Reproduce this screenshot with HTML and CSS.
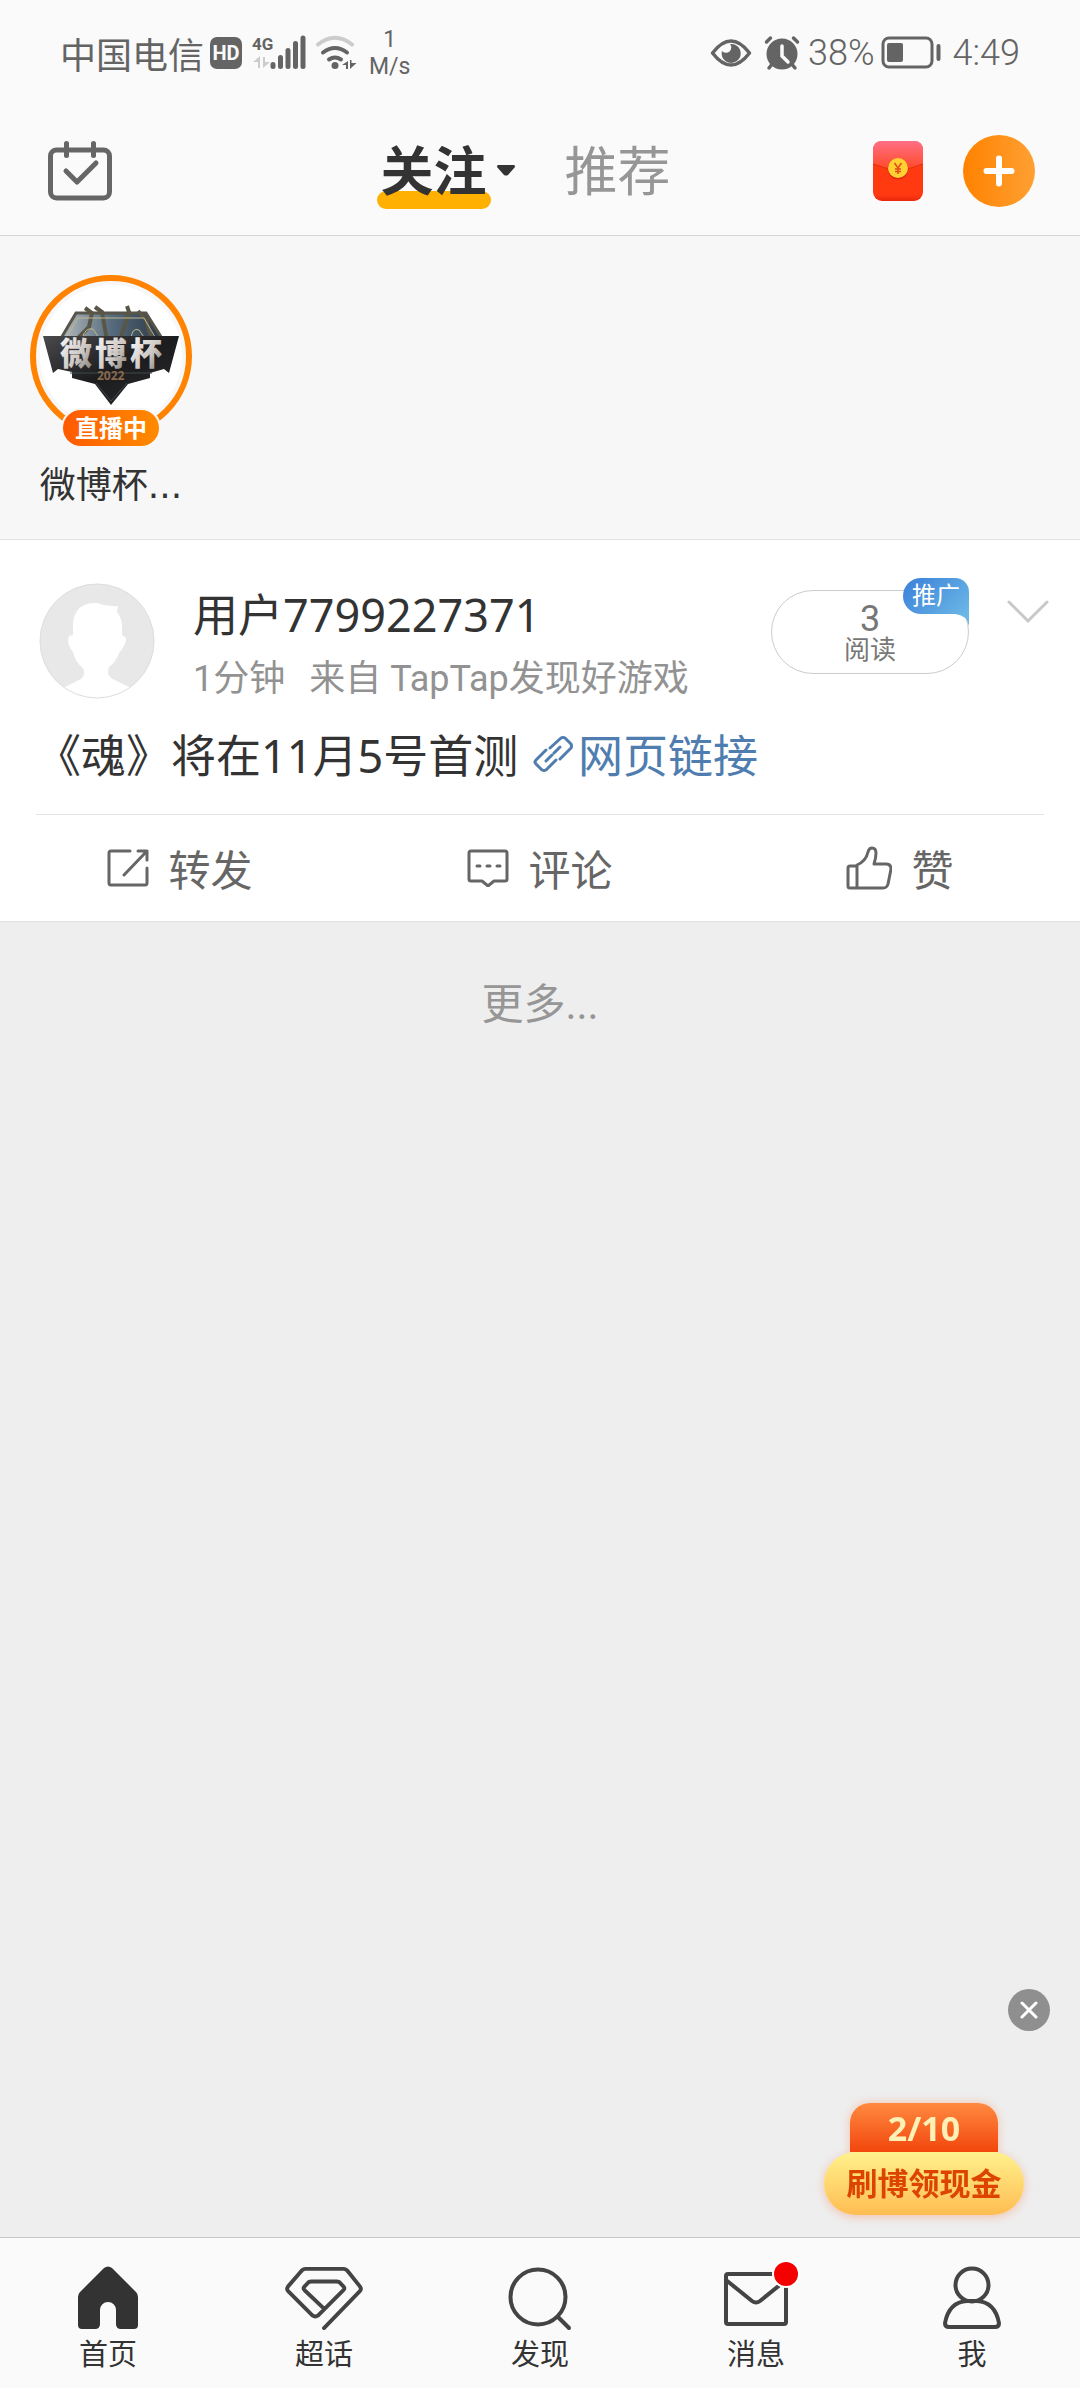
FILE: index.html
```html
<!DOCTYPE html>
<html lang="zh-CN">
	<head>
		<meta charset="UTF-8" />
		<meta name="viewport" content="width=device-width, initial-scale=1" />
		<title>微博</title>
		<link rel="stylesheet" href="styles.css">
	</head>
	<body>
		<div class="status">
			<div class="status-left">
				<span class="carrier">中国电信</span>
				<span class="hd">HD</span>
				<svg class="signal" width="54" height="36" viewBox="0 0 54 36">
					<text x="0" y="15" class="net">4G</text>
					<path d="M8 21v12H6v-6H1zM11 33V22h2v5h5z" fill="#ccc" />
					<g stroke="#646464" stroke-width="5" stroke-linecap="round">
						<path d="M21 29.500v2M28.500 22.500v9M36 15.500v16M43.500 8.500v23M51 3v28.500" />
					</g>
				</svg>
				<svg class="wifi" width="41" height="36" viewBox="0 0 41 36">
					<g fill="none" stroke="#646464" stroke-width="4" stroke-linecap="round">
						<path d="M2 9.500Q19 -4 36 9.500" stroke="#ccc" />
						<path d="M7 17.500Q19 8.500 31 17.500" />
						<path d="M13 24.500Q19 20.500 25 24.500" />
					</g>
					<circle cx="19" cy="30.500" r="3.500" fill="#646464" />
					<path d="M32 26v8h-2v-4h-4zM34 34v-9h1.500v3h5z" fill="#646464" />
				</svg>
				<span class="speed"><span>1</span><span>M/s</span></span>
			</div>
			<div class="status-right">
				<svg width="42" height="30" viewBox="0 0 42 30">
					<path d="M2.500 15Q21 -9 39.500 15Q21 39 2.500 15z" fill="none" stroke="#646464" stroke-width="3.500" stroke-linejoin="round" />
					<path d="M20 6a9.500 9.500 0 1 1-8 7 5 5 0 1 0 8-7z" fill="#646464" />
				</svg>
				<svg class="alarm" width="36" height="36" viewBox="0 0 36 36">
					<g stroke="#646464" stroke-width="3.500" stroke-linecap="round">
						<path d="M2.500 7l4-4M33.500 7l-4-4M5 33l4-5M31 33l-4-5" />
					</g>
					<circle cx="18" cy="19" r="15.500" fill="#646464" />
					<path d="M18 11v10l6 6" fill="none" stroke="#fafafa" stroke-width="3.500" stroke-linecap="round" />
				</svg>
				<span class="percent">38%</span>
				<svg class="battery" width="60" height="34" viewBox="0 0 60 34">
					<rect x="2" y="2" width="49" height="29" rx="6" fill="none" stroke="#646464" stroke-width="3" />
					<rect x="6" y="7" width="16" height="19" rx="2" fill="#646464" />
					<path d="M57.500 10v13" stroke="#646464" stroke-width="4" stroke-linecap="round" />
				</svg>
				<span class="clock">4:49</span>
			</div>
		</div>

		<header class="topbar">
			<button class="icon-btn" aria-label="签到">
				<svg width="64" height="60" viewBox="0 0 64 60" fill="none" stroke="#666" stroke-width="5" stroke-linecap="round" stroke-linejoin="round">
					<rect x="2.500" y="9" width="59" height="48" rx="6" />
					<path d="M18.500 2.500v12M45.500 2.500v12M18 30l11 11 19-19" />
				</svg>
			</button>
			<nav class="tabs">
				<a href="#" class="tab active">关注</a>
				<svg class="caret" width="18" height="11" viewBox="0 0 18 11"><path d="M1 0h16q1 0 1 2l-7 8q-2 1-4 0L0 2q0-2 1-2z" fill="#333" /></svg>
				<a href="#" class="tab">推荐</a>
			</nav>
			<div class="top-actions">
				<button class="icon-btn" aria-label="红包">
					<svg width="50" height="60" viewBox="0 0 50 60">
						<defs>
							<linearGradient id="flap" x1="0" y1="0" x2="0" y2="1">
								<stop offset="0" stop-color="#ff6f86" />
								<stop offset="1" stop-color="#ff4a26" />
							</linearGradient>
							<linearGradient id="packet" x1="0" y1="0" x2="0" y2="1">
								<stop offset="0.900" stop-color="#ff3a10" />
								<stop offset="1" stop-color="#e9260c" />
							</linearGradient>
						</defs>
						<rect width="50" height="60" rx="9" fill="url(#packet)" />
						<path d="M0 23V9q0-9 9-9h32q9 0 9 9v14q-25 11-50 0z" fill="url(#flap)" />
						<path d="M0 23q25 11 50 0" fill="none" stroke="#e52c10" stroke-width="1" />
						<circle cx="25" cy="28" r="10.500" fill="#d92b10" />
						<circle cx="25" cy="27" r="10" fill="#ffd034" />
						<path d="M21.500 22l3.500 5 3.500-5M25 27v6M22 28h6M22 30.500h6" fill="none" stroke="#e5481a" stroke-width="1.500" />
					</svg>
				</button>
				<button class="add" aria-label="发微博">
					<svg width="32" height="32" viewBox="0 0 32 32" stroke="#fff" stroke-width="6" stroke-linecap="round"><path d="M16 3.500v25M3.500 16h25" /></svg>
				</button>
			</div>
		</header>

		<section class="stories">
			<a href="#" class="story">
				<span class="ring">
					<svg width="142" height="142" viewBox="0 0 142 142">
						<defs>
							<linearGradient id="glass" x1="0" y1="0" x2="1" y2="0">
								<stop offset="0" stop-color="#b5bcc0" />
								<stop offset="0.500" stop-color="#566b7c" />
								<stop offset="1" stop-color="#2a3846" />
							</linearGradient>
							<linearGradient id="plate" x1="0" y1="0" x2="1" y2="1">
								<stop offset="0" stop-color="#4a4a4c" />
								<stop offset="0.500" stop-color="#1c1c1f" />
								<stop offset="1" stop-color="#2c2c2e" />
							</linearGradient>
							<linearGradient id="steel" x1="0" y1="0" x2="1" y2="1">
								<stop offset="0" stop-color="#fff" />
								<stop offset="0.600" stop-color="#ccc6c2" />
								<stop offset="1" stop-color="#79736e" />
							</linearGradient>
						</defs>
						<circle cx="71" cy="71" r="71" fill="#fff" />
						<path d="M20 55L36 28h70l17 27z" fill="url(#glass)" stroke="#57544a" stroke-width="3" />
						<path d="M45 23l7 5-3 14-12 12M55 22l7 5 5 28M87 21l2 6-9 28M98 26l8 9 6 20" fill="none" stroke="#5a5647" stroke-width="4" />
						<path d="M27 52l11-19h66l11 19M42 54q3-12 11-10l8 12M91 54q1-12 8-9l7 10" fill="none" stroke="#c1b68c" stroke-width="1" />
						<path d="M3 51h136l-10 37-5-4-14 4v5l-22 6-17 21-16-21-23-6v-6l-14-3-5 4z" fill="url(#plate)" />
						<path d="M30 88h82M56 98l15 18 16-18" fill="none" stroke="#3d4a4d" stroke-width="1" />
						<text x="20" y="80" class="cup">微</text>
						<text x="55" y="80" class="cup">博</text>
						<text x="90" y="80" class="cup">杯</text>
						<text x="57" y="95" class="year">2022</text>
					</svg>
					<span class="live">直播中</span>
				</span>
				<span class="story-name">微博杯...</span>
			</a>
		</section>

		<main class="feed">
			<article class="post">
				<div class="post-head">
					<svg class="avatar" width="116" height="116" viewBox="0 0 116 116">
						<defs><clipPath id="round"><circle cx="58" cy="58" r="57" /></clipPath></defs>
						<circle cx="58" cy="58" r="57" fill="#e8e8e8" />
						<path clip-path="url(#round)" d="M34 39Q37 19 58 20Q69 24 79 23L78 29Q82 34 83 41V52L87 55Q88 61 80 70Q77 79 70 84Q66 94 78 98L98 108V116H18V108L38 98Q48 94 44 85Q36 79 34 69Q27 60 30 53L34 52z" fill="#fff" />
						<circle cx="58" cy="58" r="57" fill="none" stroke="#ddd" />
					</svg>
					<div class="author">
						<a href="#" class="name">用户7799227371</a>
						<div class="meta"><span>1分钟</span><span>来自 TapTap发现好游戏</span></div>
					</div>
					<div class="reads">
						<span class="count">3</span>
						<span class="reads-label">阅读</span>
						<a href="#" class="promote">推广<svg width="14" height="12" viewBox="0 0 14 12"><path d="M0 0h14v12Q12 1 0 0z" fill="#6bb8e6" /></svg></a>
					</div>
					<button class="icon-btn more" aria-label="更多操作">
						<svg width="42" height="24" viewBox="0 0 42 24" fill="none" stroke="#c8c8c8" stroke-width="3" stroke-linecap="round"><path d="M2 2l19 19L40 2" /></svg>
					</button>
				</div>
				<p class="text">《魂》将在11月5号首测 <a href="#"><svg width="45" height="37" viewBox="0 0 45 37" fill="none" stroke="#507daf" stroke-width="3" stroke-linecap="round" stroke-linejoin="round"><path d="M16 14L6 24q-2 2 0 4l6 6q2 1 4 0l10-10M20 12L31 2q2-1 4 0l6 6q1 2 0 4L30 23M16 25l6-6M24 17l6-6" /></svg>网页链接</a></p>
				<div class="actions">
					<button>
						<svg width="42" height="38" viewBox="0 0 42 38" fill="none" stroke="#666" stroke-width="3" stroke-linecap="round" stroke-linejoin="round"><path d="M23 2H4Q2 2 2 4v30q0 2 2 2h34q2 0 2-2V19M31 2h9v9M40 2L17 26" /></svg>
						转发
					</button>
					<button>
						<svg width="42" height="38" viewBox="0 0 42 38" fill="none" stroke="#666" stroke-width="3" stroke-linecap="round" stroke-linejoin="round"><path d="M4 2h34q2 0 2 2v26q0 2-2 2H27l-6 5-6-5H4q-2 0-2-2V4q0-2 2-2z" /><path d="M10 17h3M20 17h3M30 17h3" /></svg>
						评论
					</button>
					<button>
						<svg width="46" height="44" viewBox="0 0 46 44" fill="none" stroke="#666" stroke-width="3" stroke-linecap="round" stroke-linejoin="round"><path d="M11 20H4q-2 0-2 2v18q0 2 2 2h33q4 0 5-4l3-15q0-5-5-5H28q2-6 2-11 0-5-4-5-3 0-4 4-2 9-11 13v22" /></svg>
						赞
					</button>
				</div>
			</article>
			<button class="load-more">更多...</button>
		</main>

		<aside class="bonus">
			<button class="close" aria-label="关闭">
				<svg width="18" height="18" viewBox="0 0 18 18" stroke="#fff" stroke-width="3" stroke-linecap="round"><path d="M2 2l14 14M16 2L2 16" /></svg>
			</button>
			<a href="#" class="cash">
				<span class="progress">2/10</span>
				<span class="cash-label">刷博领现金</span>
			</a>
		</aside>

		<nav class="bottom">
			<a href="#">
				<svg width="62" height="64" viewBox="0 0 62 64"><path d="M27 2q4-3 8 0l24 24q2 2 2 5v28q0 4-4 4H44q-5 0-5-5V44a8 8 0 0 0-16 0v14q0 5-5 5H5q-4 0-4-4V31q0-3 2-5z" fill="#333" /></svg>
				首页
			</a>
			<a href="#">
				<svg width="80" height="66" viewBox="0 0 80 66" fill="none" stroke="#444" stroke-width="4" stroke-linecap="round" stroke-linejoin="round"><path d="M40 64L77 26q2-2 0-5L65 6q-2-3-5-3H21q-3 0-5 3L3 21q-2 3 0 5l25 25q3 2 6 0l26-26q2-2 0-4l-3-3q-1-2-4-2H27q-3 0-4 2l-3 3q-2 2 0 4l20 19" /></svg>
				超话
			</a>
			<a href="#">
				<svg width="64" height="64" viewBox="0 0 64 64" fill="none" stroke="#444" stroke-width="4" stroke-linecap="round"><circle cx="30" cy="31" r="27.500" /><path d="M50 51l11 11" /></svg>
				发现
			</a>
			<a href="#">
				<svg class="mail" width="76" height="64" viewBox="0 0 76 64" fill="none" stroke="#444" stroke-width="4" stroke-linejoin="round"><rect x="8" y="8" width="60" height="50" rx="2" /><path d="M8 14l26 21q4 3 8 0l26-21" /><circle cx="68" cy="8" r="14" fill="#fff" stroke="none" /><circle cx="68" cy="8" r="12" fill="#f40000" stroke="none" /></svg>
				消息
			</a>
			<a href="#">
				<svg width="58" height="64" viewBox="0 0 58 64" fill="none" stroke="#444" stroke-width="4" stroke-linejoin="round"><circle cx="29" cy="19" r="16.500" /><path d="M6 61q-4 0-4-4 4-21 22-22h10q18 1 22 22 0 4-4 4z" /></svg>
				我
			</a>
		</nav>
	</body>
</html>
```
FILE: styles.css
```css
* {
	box-sizing: border-box;
}
body {
	display: flex;
	flex-direction: column;
	min-height: 100vh;
	margin: 0;
	background: #eee;
	color: #333;
	font-family: "Noto Sans", "Noto Sans CJK SC", sans-serif;
}
a {
	color: inherit;
	text-decoration: none;
}
button {
	padding: 0;
	border: 0;
	background: none;
	color: inherit;
	font: inherit;
	cursor: pointer;
}
svg {
	display: block;
	flex: none;
}

/* barra de estado */
.status {
	display: flex;
	justify-content: space-between;
	align-items: center;
	height: 106px;
	padding: 0 60px;
	background: #fafafa;
	color: #646464;
	font-family: Roboto, "Noto Sans CJK SC", sans-serif;
	font-size: 36px;
	font-weight: 300;
}
.status-left,
.status-right {
	display: flex;
	align-items: center;
}
.carrier {
	font-weight: 400;
}
.hd {
	width: 32px;
	margin: 0 10px 0 6px;
	border-radius: 7px;
	background: #646464;
	color: #fafafa;
	font-size: 20px;
	font-weight: 700;
	line-height: 32px;
	text-align: center;
}
.net {
	fill: #646464;
	font-family: Roboto, sans-serif;
	font-size: 17px;
	font-weight: 700;
}
.wifi {
	margin: 0 12px 0 10px;
}
.speed {
	display: flex;
	flex-direction: column;
	font-size: 23px;
	font-weight: 400;
	line-height: 27px;
	text-align: center;
}
.alarm {
	margin: 0 8px 0 12px;
}
.battery {
	margin: 0 12px 0 6px;
}

/* cabecera */
.topbar {
	display: grid;
	grid-template-columns: 1fr auto 1fr;
	align-items: center;
	height: 130px;
	padding: 0 45px 0 48px;
	border-bottom: 1px solid #d5d5d5;
	background: #fafafa;
}
.icon-btn {
	justify-self: start;
}
.tabs {
	display: flex;
	align-items: center;
	padding-right: 36px;
}
.tab {
	color: #969696;
	font-size: 53px;
	line-height: 76px;
}
.tab.active {
	position: relative;
	z-index: 1;
	padding: 0 4px;
	color: #333;
	font-weight: 700;
}
.tab.active::before {
	content: "";
	position: absolute;
	left: 0;
	right: 0;
	bottom: 0;
	z-index: -1;
	height: 18px;
	border-radius: 9px;
	background: #ffb000;
}
.caret {
	margin: 0 50px 0 6px;
}
.top-actions {
	display: flex;
	justify-content: flex-end;
	align-items: center;
	gap: 40px;
}
.add {
	display: grid;
	place-items: center;
	width: 72px;
	height: 72px;
	border-radius: 50%;
	background: linear-gradient(90deg, #ff8200, #ffa033);
}

/* historias */
.stories {
	padding: 39px 30px 26px;
	border-bottom: 1px solid #e2e2e2;
	background: #f7f7f7;
}
.story {
	display: inline-flex;
	flex-direction: column;
	align-items: center;
	gap: 22px;
}
.ring {
	position: relative;
	padding: 4px;
	border: 6px solid #ff8200;
	border-radius: 50%;
	background: #f7f7f7;
}
.cup {
	fill: url(#steel);
	font-size: 32px;
	font-weight: 900;
}
.year {
	fill: #8b6a4b;
	font-size: 12px;
	font-weight: 700;
}
.live {
	position: absolute;
	bottom: -17px;
	left: 50%;
	width: 100px;
	transform: translateX(-50%);
	border: 2px solid #f7f7f7;
	border-radius: 20px;
	background: linear-gradient(90deg, #ff5a00, #ff8b00);
	color: #fff;
	font-size: 24px;
	font-weight: 700;
	line-height: 36px;
	text-align: center;
}
.story-name {
	font-family: "DejaVu Sans", "Noto Sans CJK SC", sans-serif;
	font-size: 36px;
	line-height: 54px;
}

/* publicacion */
.post {
	border-bottom: 1px solid #e2e2e2;
	background: #fff;
}
.post-head {
	display: flex;
	align-items: flex-start;
	padding: 43px 31px 0 39px;
}
.author {
	flex: 1;
	margin-left: 38px;
}
.name {
	display: block;
	font-size: 45px;
	line-height: 64px;
}
.meta {
	display: flex;
	gap: 24px;
	color: #929292;
	font-family: Roboto, "Noto Sans CJK SC", sans-serif;
	font-size: 36px;
	line-height: 64px;
}
.reads {
	position: relative;
	display: flex;
	flex-direction: column;
	align-items: center;
	width: 198px;
	height: 84px;
	margin-top: 7px;
	padding-top: 11px;
	border: 1px solid #ccc;
	border-radius: 42px;
	color: #777;
	font-family: Roboto, "Noto Sans CJK SC", sans-serif;
}
.count {
	font-size: 36px;
	line-height: 34px;
}
.reads-label {
	font-size: 26px;
	line-height: 28px;
}
.promote {
	position: absolute;
	top: -13px;
	right: -1px;
	width: 66px;
	border-radius: 18px 14px 0 18px;
	background: linear-gradient(135deg, #3b7fd9, #6bb8e6);
	color: #fff;
	font-size: 24px;
	line-height: 36px;
	text-align: center;
}
.promote svg {
	position: absolute;
	top: 100%;
	right: 0;
}
.more {
	margin: 17px 0 0 38px;
}
.text {
	margin: 0;
	padding: 12px 36px 25px;
	font-size: 45px;
	line-height: 66px;
}
.text a {
	color: #507daf;
}
.text svg {
	display: inline-block;
	margin-right: 3px;
}
.actions {
	display: grid;
	grid-template-columns: repeat(3, 1fr);
	position: relative;
	height: 107px;
}
.actions::before {
	content: "";
	position: absolute;
	top: 0;
	left: 36px;
	right: 36px;
	border-top: 1px solid #e4e4e4;
}
.actions button {
	display: flex;
	justify-content: center;
	align-items: center;
	gap: 19px;
	color: #666;
	font-size: 42px;
}
.load-more {
	display: block;
	width: 100%;
	padding: 50px 0;
	color: #969696;
	font-family: Roboto, "Noto Sans CJK SC", sans-serif;
	font-size: 42px;
	line-height: 66px;
}

/* aviso flotante */
.bonus {
	position: fixed;
	right: 30px;
	bottom: 173px;
	display: flex;
	flex-direction: column;
	align-items: flex-end;
	gap: 72px;
}
.close {
	display: grid;
	place-items: center;
	width: 42px;
	height: 42px;
	border-radius: 50%;
	background: #8f8f8f;
}
.cash {
	display: flex;
	flex-direction: column;
	align-items: center;
	margin-right: 26px;
	font-weight: 700;
}
.progress {
	width: 148px;
	border-radius: 20px 20px 0 0;
	background: linear-gradient(#ff8a40, #f2460d);
	box-shadow: 0 0 10px #ff641e50;
	color: #fff0b5;
	font-size: 34px;
	line-height: 48px;
	padding-top: 1px;
	text-align: center;
}
.cash-label {
	position: relative;
	width: 200px;
	border-radius: 32px;
	background: linear-gradient(#fff18c, #ffbd52);
	box-shadow: 0 2px 10px #ff641e50;
	color: #dc4400;
	font-size: 31px;
	line-height: 63px;
	text-align: center;
}

/* menu inferior */
.bottom {
	display: grid;
	grid-template-columns: repeat(5, 1fr);
	height: 151px;
	margin-top: auto;
	border-top: 1px solid #c8c8c8;
	background: #fafafa;
}
.bottom a {
	display: flex;
	flex-direction: column;
	align-items: center;
	padding-top: 28px;
	font-size: 29px;
	line-height: 48px;
}
.bottom svg {
	height: 64px;
	overflow: visible;
}
```
